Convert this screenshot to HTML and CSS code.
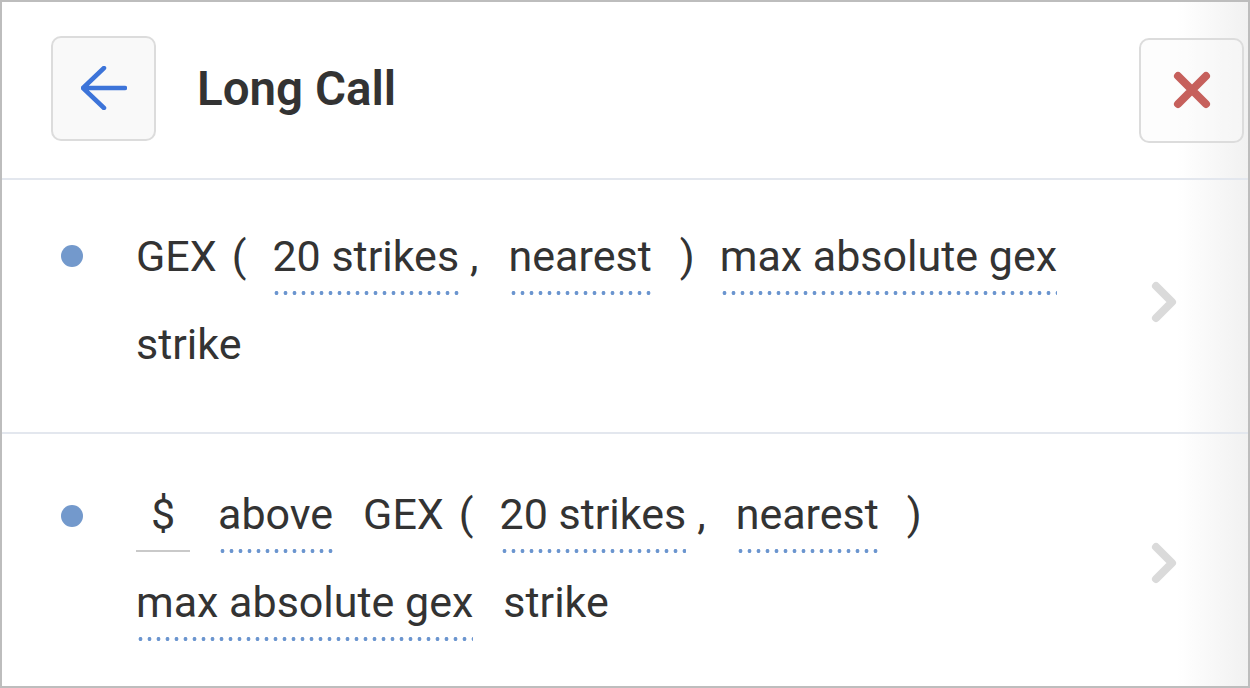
FILE: index.html
```html
<!DOCTYPE html>
<html lang="en">
<head>
<meta charset="utf-8">
<title>Long Call</title>
<link rel="stylesheet" href="styles.css">
</head>
<body>
<div class="frame">
  <header class="header">
    <button class="icon-btn back" aria-label="Back">
      <svg width="46" height="44" viewBox="0 0 46 44" aria-hidden="true">
        <path d="M23 2 L2 22 L23 42 M2 22 L44 22" fill="none" stroke="#3d74d9" stroke-width="4.5" stroke-linecap="round" stroke-linejoin="round"/>
      </svg>
    </button>
    <h1 class="title">Long Call</h1>
    <button class="icon-btn close" aria-label="Close">
      <svg width="40" height="40" viewBox="0 0 40 40" aria-hidden="true">
        <path d="M6 6 L34 34 M34 6 L6 34" fill="none" stroke="#c6605c" stroke-width="8" stroke-linecap="round"/>
      </svg>
    </button>
  </header>

  <div class="row row-first">
    <span class="bullet-wrap"><span class="bullet"></span></span>
    <div class="expr">
      <span class="tok">GEX</span>
      <span class="tok open">(</span>
      <span class="tok link">20 strikes</span>
      <span class="tok comma">,</span>
      <span class="tok link">nearest</span>
      <span class="tok close-paren">)</span>
      <span class="tok link">max absolute gex</span>
      <span class="tok">strike</span>
    </div>
    <span class="chev">
      <svg width="30" height="44" viewBox="0 0 30 44" aria-hidden="true">
        <path d="M7 6 L23 22 L7 38" fill="none" stroke="#dadada" stroke-width="8" stroke-linecap="round" stroke-linejoin="round"/>
      </svg>
    </span>
  </div>

  <div class="row row-second">
    <span class="bullet-wrap"><span class="bullet"></span></span>
    <div class="expr">
      <span class="tok input">$</span>
      <span class="tok link">above</span>
      <span class="tok">GEX</span>
      <span class="tok open">(</span>
      <span class="tok link">20 strikes</span>
      <span class="tok comma">,</span>
      <span class="tok link">nearest</span>
      <span class="tok close-paren">)</span>
      <span class="tok link">max absolute gex</span>
      <span class="tok">strike</span>
    </div>
    <span class="chev">
      <svg width="30" height="44" viewBox="0 0 30 44" aria-hidden="true">
        <path d="M7 6 L23 22 L7 38" fill="none" stroke="#dadada" stroke-width="8" stroke-linecap="round" stroke-linejoin="round"/>
      </svg>
    </span>
  </div>
</div>
</body>
</html>
```

FILE: styles.css
```css
* { box-sizing: border-box; }

html, body {
  margin: 0;
  padding: 0;
  background: #ffffff;
}

body {
  font-family: Roboto, "Noto Sans", "Liberation Sans", sans-serif;
  color: #333333;
}

.frame {
  width: 1250px;
  height: 688px;
  border: 2px solid #bdbdbd;
  background: linear-gradient(to right, #ffffff 0, #ffffff 1175px, #f1f1f1 1246px);
  overflow: hidden;
}

.header {
  height: 178px;
  display: flex;
  align-items: center;
  padding: 0 4px 0 49px;
  border-bottom: 2px solid #e3e7ee;
}

.icon-btn {
  width: 105px;
  height: 105px;
  border: 2px solid #dcdcdc;
  border-radius: 10px;
  background: #f9f9f9;
  display: flex;
  align-items: center;
  justify-content: center;
  padding: 0;
  flex: none;
}

.icon-btn.back { margin-top: -4px; }

.icon-btn.close {
  margin-left: auto;
  background: rgba(250, 250, 250, 0.4);
}

.title {
  margin: -2px 0 0 41px;
  font-size: 47.5px;
  font-weight: 600;
  color: #333333;
  letter-spacing: 0;
}

.row {
  height: 254px;
  display: flex;
  align-items: flex-start;
  padding: 32px 69px 0 60px;
}

.row-first { border-bottom: 2px solid #e3e7ee; }
.row-second { height: 252px; padding-top: 36px; }

.bullet-wrap {
  width: 22px;
  height: 88px;
  margin-right: 53px;
  margin-left: -1px;
  display: flex;
  align-items: center;
  flex: none;
}

.row-second .bullet-wrap { padding-top: 4px; }

.bullet {
  width: 22px;
  height: 22px;
  border-radius: 50%;
  background: #7399cc;
}

.expr {
  flex: 1;
  display: flex;
  flex-wrap: wrap;
  column-gap: 30px;
  font-size: 43px;
  line-height: 88px;
}

.tok {
  height: 88px;
  white-space: nowrap;
}

.tok.open { margin-left: -15px; margin-right: -4px; }
.tok.comma { margin-left: -19px; }
.tok.close-paren { margin-left: -2px; margin-right: -5px; }

.tok.link {
  background-image: radial-gradient(circle at center, #6b95cf 1.7px, rgba(107, 149, 207, 0) 2.2px);
  background-size: 9px 6px;
  background-repeat: repeat-x;
  background-position: 0 calc(100% - 4px);
}

.tok.input {
  width: 54px;
  text-align: center;
  background: linear-gradient(#c9c9c9, #c9c9c9) no-repeat;
  background-size: 100% 2px;
  background-position: 0 calc(100% - 6px);
}

.row-second .tok.input + .tok.link { margin-left: -2px; }

.chev {
  flex: none;
  width: 30px;
  margin-left: 9px;
  align-self: center;
  display: flex;
}

.row-first .chev { margin-top: -40px; }
.row-second .chev { margin-top: -31px; }
```
